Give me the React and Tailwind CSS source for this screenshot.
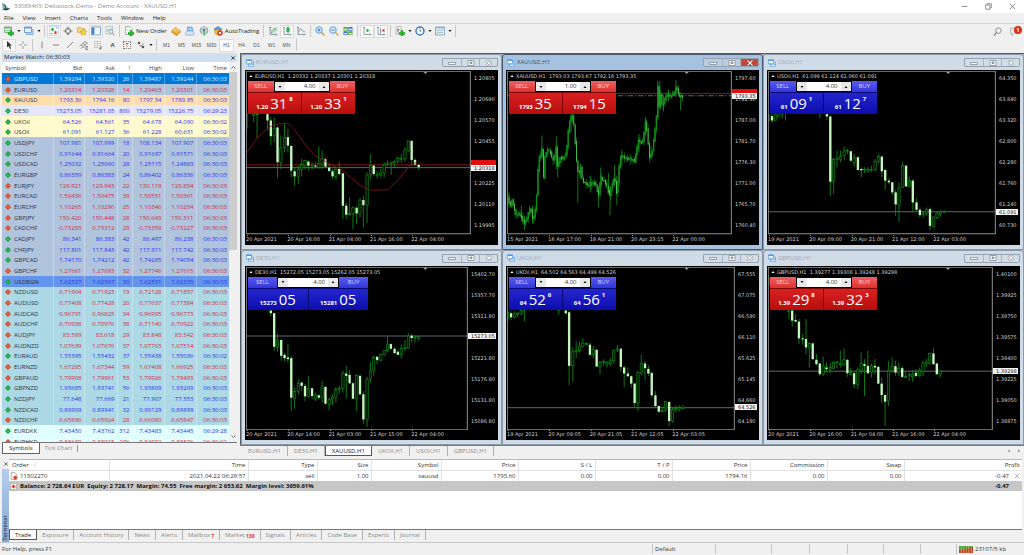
import { useState } from 'react';
import clsx from 'clsx';

// symbol, bid, ask, spread, high, low, time, direction, row colour
const QUOTES = [
  ['GBPUSD', '1.39294', '1.39320', '26', '1.39487', '1.39244', '06:30:03', 'down', 'bg-[#0078d7]'],
  ['EURUSD', '1.20314', '1.20328', '14', '1.20463', '1.20301', '06:30:03', 'down', 'bg-[#b0c4de]'],
  ['XAUUSD', '1793.36', '1794.16', '80', '1797.54', '1789.95', '06:30:03', 'up', 'bg-[#ffdead]'],
  ['DE30', '15273.05', '15281.05', '800', '15279.05', '15226.75', '06:29:23', 'up', 'bg-[#e6e6fa]'],
  ['UKOil', '64.526', '64.561', '35', '64.678', '64.090', '06:30:02', 'up', 'bg-[#fffacd]'],
  ['USOil', '61.091', '61.127', '36', '61.228', '60.631', '06:30:02', 'up', 'bg-[#fffacd]'],
  ['USDJPY', '107.981', '107.999', '18', '108.134', '107.907', '06:30:03', 'up', 'bg-[#b0c4de]'],
  ['USDCHF', '0.91644', '0.91664', '20', '0.91697', '0.91571', '06:30:03', 'up', 'bg-[#b0c4de]'],
  ['USDCAD', '1.25032', '1.25060', '28', '1.25115', '1.24883', '06:30:03', 'up', 'bg-[#b0c4de]'],
  ['EURGBP', '0.86359', '0.86383', '24', '0.86402', '0.86336', '06:30:03', 'up', 'bg-[#b0c4de]'],
  ['EURJPY', '129.921', '129.943', '22', '130.119', '129.854', '06:30:03', 'down', 'bg-[#b0c4de]'],
  ['EURCAD', '1.50436', '1.50475', '39', '1.50551', '1.50361', '06:30:03', 'down', 'bg-[#b0c4de]'],
  ['EURCHF', '1.10265', '1.10290', '25', '1.10346', '1.10254', '06:30:03', 'down', 'bg-[#b0c4de]'],
  ['GBPJPY', '150.420', '150.448', '28', '150.643', '150.311', '06:30:03', 'down', 'bg-[#b0c4de]'],
  ['CADCHF', '0.73283', '0.73312', '29', '0.73358', '0.73227', '06:30:03', 'down', 'bg-[#b0c4de]'],
  ['CADJPY', '86.341', '86.383', '42', '86.497', '86.238', '06:30:03', 'up', 'bg-[#b0c4de]'],
  ['CHFJPY', '117.801', '117.843', '42', '117.911', '117.742', '06:30:03', 'up', 'bg-[#b0c4de]'],
  ['GBPCAD', '1.74170', '1.74212', '42', '1.74285', '1.74054', '06:30:03', 'up', 'bg-[#b0c4de]'],
  ['GBPCHF', '1.27661', '1.27693', '32', '1.27746', '1.27615', '06:30:03', 'down', 'bg-[#b0c4de]'],
  ['USDBGN', '1.62537', '1.62567', '30', '1.62551', '1.62335', '06:30:03', 'up', 'bg-[#6495ed]'],
  ['NZDUSD', '0.71904', '0.71923', '19', '0.72128', '0.71857', '06:30:03', 'down', 'bg-[#add8e6]'],
  ['AUDUSD', '0.77408', '0.77428', '20', '0.77637', '0.77384', '06:30:03', 'down', 'bg-[#add8e6]'],
  ['AUDCAD', '0.96791', '0.96825', '34', '0.96995', '0.96773', '06:30:03', 'down', 'bg-[#add8e6]'],
  ['AUDCHF', '0.70938', '0.70976', '38', '0.71140', '0.70922', '06:30:03', 'down', 'bg-[#add8e6]'],
  ['AUDJPY', '83.589', '83.618', '29', '83.848', '83.542', '06:30:03', 'down', 'bg-[#add8e6]'],
  ['AUDNZD', '1.07639', '1.07676', '37', '1.07763', '1.07514', '06:30:03', 'down', 'bg-[#add8e6]'],
  ['EURAUD', '1.55395', '1.55432', '37', '1.55438', '1.55036', '06:30:02', 'up', 'bg-[#add8e6]'],
  ['EURNZD', '1.67285', '1.67344', '59', '1.67408', '1.66925', '06:30:03', 'down', 'bg-[#add8e6]'],
  ['GBPAUD', '1.79908', '1.79961', '53', '1.79926', '1.79493', '06:30:03', 'down', 'bg-[#add8e6]'],
  ['GBPNZD', '1.93685', '1.93741', '56', '1.93809', '1.93209', '06:30:03', 'up', 'bg-[#add8e6]'],
  ['NZDJPY', '77.648', '77.669', '21', '77.907', '77.553', '06:30:03', 'up', 'bg-[#add8e6]'],
  ['NZDCAD', '0.89909', '0.89941', '32', '0.90129', '0.89899', '06:30:03', 'up', 'bg-[#add8e6]'],
  ['NZDCHF', '0.65896', '0.65924', '28', '0.66080', '0.65847', '06:30:03', 'down', 'bg-[#add8e6]'],
  ['EURDKK', '7.43450', '7.43762', '312', '7.43483', '7.43445', '06:29:28', 'up', 'bg-[#e0ffff]'],
  ['EURHKD', '9.33639', '9.33915', '276', '9.34992', '9.33576', '06:30:02', 'down', 'bg-[#e0ffff]'],
];

// candle: x, high, body top, body bottom, low, 1 = bull
const EURUSD = [
  [17, 130, 186, 225, 235, 1], [38, 186, 186, 190, 210, 1], [48, 186, 186, 188, 258, 1],
  [79, 180, 186, 205, 235, 0], [89, 195, 205, 252, 278, 0], [99, 195, 228, 250, 270, 1],
  [109, 222, 226, 330, 376, 0], [119, 250, 287, 330, 350, 1], [130, 212, 255, 287, 300, 1],
  [140, 230, 255, 280, 300, 0], [150, 280, 281, 355, 375, 0], [160, 345, 357, 372, 400, 0],
  [171, 340, 352, 372, 395, 1], [181, 320, 337, 352, 372, 1], [191, 322, 325, 340, 352, 1],
  [201, 325, 328, 340, 355, 0], [212, 328, 338, 341, 352, 1], [222, 330, 340, 343, 350, 0],
  [232, 283, 333, 345, 350, 1], [242, 295, 320, 335, 350, 1], [252, 315, 321, 343, 348, 0],
  [263, 335, 346, 356, 360, 0], [273, 350, 357, 372, 380, 0], [283, 345, 352, 372, 382, 1],
  [293, 328, 350, 365, 370, 0], [304, 362, 363, 460, 500, 0], [314, 450, 460, 487, 500, 0],
  [324, 435, 483, 487, 490, 1], [334, 462, 466, 483, 530, 1], [345, 462, 466, 483, 515, 0],
  [355, 438, 443, 483, 495, 1], [365, 430, 443, 458, 525, 0], [376, 360, 368, 458, 512, 1],
  [386, 306, 340, 368, 380, 1], [396, 335, 340, 365, 372, 0], [406, 355, 366, 370, 378, 1],
  [417, 350, 362, 368, 375, 1], [427, 330, 336, 362, 375, 1], [437, 325, 333, 336, 340, 1],
  [448, 328, 330, 335, 368, 1], [458, 325, 328, 332, 345, 1], [468, 312, 318, 328, 335, 1],
  [478, 305, 318, 322, 332, 1], [489, 285, 293, 320, 328, 1], [499, 264, 266, 295, 300, 1],
  [509, 264, 266, 323, 340, 0], [519, 318, 323, 337, 340, 0], [530, 334, 338, 345, 353, 0],
];

const USOIL = [
  [23, 185, 190, 205, 208, 1], [33, 185, 192, 205, 213, 0], [43, 180, 188, 205, 207, 1],
  [53, 180, 185, 192, 195, 1], [63, 180, 184, 186, 200, 1], [73, 180, 182, 184, 205, 1],
  [175, 180, 182, 185, 198, 1], [196, 180, 186, 193, 203, 0], [206, 190, 193, 388, 430, 0],
  [216, 315, 322, 388, 425, 1], [226, 295, 319, 322, 345, 1], [236, 295, 312, 322, 330, 1],
  [247, 283, 296, 310, 322, 1], [257, 290, 295, 298, 305, 1], [267, 295, 297, 325, 330, 0],
  [277, 305, 315, 332, 343, 1], [288, 312, 315, 353, 355, 0], [298, 345, 350, 354, 374, 0],
  [308, 345, 351, 354, 362, 1], [318, 345, 352, 355, 362, 1], [328, 340, 351, 354, 358, 1],
  [339, 320, 328, 352, 358, 1], [349, 305, 312, 328, 333, 1], [359, 310, 313, 357, 375, 0],
  [369, 350, 353, 385, 412, 0], [380, 378, 385, 390, 395, 0], [390, 388, 390, 420, 428, 0],
  [400, 412, 420, 456, 490, 0], [410, 390, 407, 458, 508, 1], [421, 328, 340, 405, 406, 1],
  [431, 338, 340, 402, 404, 0], [441, 375, 385, 402, 404, 1], [451, 380, 385, 450, 475, 0],
  [462, 438, 450, 472, 475, 0], [472, 465, 472, 488, 495, 0], [482, 475, 484, 487, 495, 1],
  [492, 465, 472, 482, 490, 1], [502, 465, 470, 520, 533, 0], [513, 490, 494, 522, 525, 1],
  [523, 476, 482, 495, 500, 1], [533, 474, 478, 484, 492, 1], [544, 472, 476, 480, 482, 1],
];

const DE30 = [
  [89, 178, 180, 188, 197, 0], [99, 186, 188, 288, 300, 0], [109, 250, 268, 290, 302, 1],
  [120, 265, 268, 315, 330, 0], [130, 308, 312, 322, 332, 0], [140, 280, 320, 325, 335, 0],
  [150, 315, 322, 440, 480, 0], [160, 410, 422, 442, 473, 1], [171, 385, 397, 422, 430, 1],
  [181, 392, 395, 405, 420, 0], [191, 398, 405, 436, 450, 0], [201, 375, 412, 436, 440, 1],
  [212, 410, 412, 435, 445, 0], [222, 425, 432, 442, 450, 1], [232, 430, 433, 440, 445, 0],
  [242, 390, 408, 440, 455, 1], [252, 405, 408, 458, 460, 0], [263, 440, 445, 460, 478, 1],
  [273, 430, 438, 445, 462, 1], [283, 408, 415, 440, 455, 1], [293, 405, 412, 415, 430, 1],
  [304, 360, 367, 412, 425, 1], [314, 345, 368, 375, 442, 0], [324, 358, 372, 397, 400, 0],
  [334, 395, 397, 443, 445, 0], [345, 370, 373, 443, 480, 1], [355, 370, 375, 430, 432, 0],
  [365, 420, 430, 505, 518, 0], [376, 378, 385, 505, 528, 1], [386, 333, 360, 385, 395, 1],
  [396, 315, 320, 358, 375, 1], [406, 315, 318, 328, 340, 0], [417, 308, 312, 328, 332, 1],
  [427, 298, 300, 312, 315, 1], [437, 258, 280, 300, 305, 1], [447, 278, 280, 294, 297, 0],
  [458, 290, 294, 307, 310, 0], [468, 298, 303, 312, 313, 0], [478, 283, 293, 312, 322, 1],
  [489, 268, 290, 293, 300, 1], [499, 247, 256, 293, 294, 1], [509, 250, 255, 262, 275, 0],
  [519, 255, 260, 263, 275, 1], [530, 255, 257, 262, 270, 1],
];

const UKOIL = [
  [20, 180, 185, 205, 215, 1], [30, 182, 188, 200, 208, 0], [40, 182, 190, 200, 204, 1],
  [50, 184, 188, 192, 200, 1], [60, 178, 180, 190, 194, 1], [70, 178, 178, 180, 212, 1],
  [172, 178, 178, 180, 192, 1], [193, 178, 180, 188, 193, 0], [203, 180, 185, 345, 403, 0],
  [214, 290, 303, 345, 392, 1], [224, 272, 300, 303, 322, 1], [234, 272, 286, 300, 305, 1],
  [244, 262, 277, 286, 290, 1], [255, 275, 279, 282, 285, 1], [265, 275, 282, 312, 315, 0],
  [275, 285, 297, 312, 322, 1], [285, 295, 297, 347, 349, 0], [295, 330, 335, 348, 370, 1],
  [306, 325, 332, 335, 345, 1], [316, 330, 335, 340, 350, 1], [326, 322, 330, 340, 345, 1],
  [336, 295, 300, 330, 338, 1], [347, 283, 294, 298, 305, 1], [357, 292, 294, 348, 362, 0],
  [367, 345, 350, 368, 408, 0], [378, 350, 368, 376, 378, 0], [388, 374, 376, 398, 410, 0],
  [398, 396, 398, 456, 470, 0], [408, 360, 365, 456, 480, 1], [418, 312, 338, 367, 372, 1],
  [429, 330, 338, 352, 388, 0], [439, 343, 354, 368, 375, 0], [449, 364, 366, 433, 440, 0],
  [460, 420, 433, 465, 470, 0], [470, 462, 465, 482, 485, 0], [480, 470, 478, 482, 484, 1],
  [490, 450, 452, 478, 482, 1], [501, 450, 453, 510, 525, 0], [511, 470, 476, 510, 515, 1],
  [521, 462, 472, 477, 485, 1], [531, 462, 470, 474, 482, 1], [542, 463, 468, 472, 475, 1],
];

const GBPUSD = [
  [21, 80, 84, 104, 106, 1], [83, 178, 178, 182, 205, 1], [93, 178, 180, 210, 228, 0],
  [103, 190, 208, 213, 215, 0], [113, 205, 213, 263, 280, 0], [124, 250, 263, 266, 282, 0],
  [134, 205, 265, 290, 310, 0], [144, 275, 278, 292, 350, 1], [154, 276, 278, 325, 328, 0],
  [165, 310, 327, 340, 345, 0], [175, 336, 338, 370, 375, 0], [185, 318, 345, 370, 375, 1],
  [195, 335, 350, 355, 365, 0], [206, 335, 350, 355, 368, 1], [216, 332, 335, 352, 355, 1],
  [226, 330, 333, 336, 352, 1], [236, 300, 338, 342, 350, 1], [247, 293, 327, 342, 345, 1],
  [257, 325, 327, 367, 378, 0], [267, 350, 365, 370, 375, 1], [277, 365, 367, 400, 412, 0],
  [288, 350, 357, 400, 415, 1], [298, 305, 337, 360, 370, 1], [308, 325, 340, 345, 435, 0],
  [318, 300, 345, 367, 370, 0], [329, 338, 345, 365, 380, 1], [339, 325, 345, 350, 370, 0],
  [349, 346, 348, 398, 400, 0], [359, 380, 398, 432, 455, 0], [369, 430, 432, 452, 525, 0],
  [379, 330, 360, 450, 465, 1], [390, 320, 346, 360, 365, 1], [400, 330, 346, 365, 375, 0],
  [410, 335, 352, 365, 375, 1], [420, 345, 352, 378, 382, 0], [430, 360, 376, 379, 382, 1],
  [441, 365, 370, 373, 390, 1], [451, 358, 370, 378, 392, 1], [461, 355, 366, 375, 380, 0],
  [472, 350, 358, 375, 378, 1], [482, 330, 336, 362, 375, 1], [492, 325, 333, 338, 348, 1],
  [502, 305, 308, 338, 342, 1], [513, 292, 308, 340, 342, 0], [523, 336, 338, 370, 372, 0],
  [533, 358, 360, 372, 380, 1],
];

// closing prices of the gold chart, which is zoomed out too far to list bar by bar
const GOLD_PATH = [
  [20, 440], [28, 460], [32, 445], [40, 470], [45, 490], [52, 485], [58, 490], [70, 515], [80, 490],
  [88, 460], [92, 500], [98, 495], [104, 460], [108, 400], [112, 320], [118, 310], [122, 285],
  [127, 383], [131, 310], [137, 295], [145, 295], [150, 315], [157, 325], [165, 280], [168, 350],
  [175, 318], [185, 320], [195, 300], [200, 240], [205, 205], [213, 192], [218, 225], [222, 290],
  [226, 340], [232, 368], [238, 345], [242, 385], [250, 393], [262, 400], [275, 390], [283, 400],
  [290, 430], [298, 375], [305, 385], [312, 395], [317, 405], [322, 435], [330, 400], [338, 375],
  [345, 430], [350, 360], [357, 310], [365, 315], [378, 322], [390, 320], [398, 330], [404, 290],
  [410, 265], [420, 275], [426, 245], [431, 200], [436, 255], [442, 315], [450, 300], [458, 240],
  [463, 190], [467, 105], [471, 165], [475, 125], [480, 165], [490, 135], [500, 130], [507, 132],
  [515, 125], [522, 105], [528, 125], [535, 135], [541, 135],
];

const GOLD_WICKS = [
  [24, 420, 460], [61, 460, 500], [70, 490, 533], [94, 460, 512], [122, 250, 320], [165, 253, 350],
  [169, 310, 375], [209, 188, 240], [229, 340, 452], [238, 335, 380], [266, 370, 420], [290, 400, 465],
  [297, 346, 410], [320, 362, 420], [325, 400, 488], [338, 340, 400], [345, 370, 458], [360, 292, 340],
  [411, 245, 300], [431, 195, 250], [447, 280, 320], [467, 87, 200], [473, 87, 160], [484, 130, 178],
  [499, 112, 145], [521, 84, 130], [535, 130, 174],
];

function goldAt(x) {
  const i = GOLD_PATH.findIndex((p) => p[0] >= x);
  if (i <= 0) return GOLD_PATH[i === 0 ? 0 : GOLD_PATH.length - 1][1];
  const [x0, y0] = GOLD_PATH[i - 1];
  const [x1, y1] = GOLD_PATH[i];
  return y0 + ((y1 - y0) * (x - x0)) / (x1 - x0);
}

const GOLD = Array.from({ length: 128 }, (_, i) => {
  const x = 20 + i * 4.1;
  const open = goldAt(x - 4.1);
  const close = goldAt(x);
  const top = Math.min(open, close) - ((i * 5) % 7);
  const bottom = Math.max(open, close) + ((i * 3) % 6);
  return [x, top - ((i * 7) % 13), top, bottom, bottom + ((i * 11) % 14), close < open ? 1 : 0];
});

const CHARTS = [
  {
    name: 'EURUSD,H1', ohlc: '1.20332 1.20337 1.20301 1.20318', color: 'red', box: [15, 57, 671, 489],
    sell: ['1.20', '31', '8'], buy: ['1.20', '33', '1'], volume: '4.00', candles: EURUSD, price: 346, ask: 338,
    tag: '1.20318', average: 'M15 305 L50 255 L80 228 L100 217 L140 213 L160 233 L190 275 L220 310 L260 331 L300 352 L330 377 L360 403 L390 414 L437 412 L460 392 L480 368 L505 338 L525 330',
    scale: ['1.20805', '1.20690', '1.20570', '1.20455', '1.20340', '1.20225', '1.20110', '1.19995'],
    dates: ['20 Apr 2021', '20 Apr 16:00', '21 Apr 04:00', '21 Apr 16:00', '22 Apr 04:00'],
  },
  {
    name: 'XAUUSD,H1', ohlc: '1793.03 1793.67 1792.16 1793.35', color: 'red', box: [18, 57, 670, 489], active: true, dense: true,
    sell: ['1793', '35'], buy: ['1794', '15'], volume: '1.00', candles: GOLD, price: 131, ask: 124, tag: '1793.35',
    scale: ['1797.60', '1792.30', '1787.00', '1781.70', '1776.30', '1771.00', '1765.70', '1760.40'],
    dates: ['15 Apr 2021', '16 Apr 17:00', '19 Apr 21:00', '20 Apr 23:15', '22 Apr 00:00'],
  },
  {
    name: 'USOil,H1', ohlc: '61.099 61.124 61.060 61.091', color: 'blue', box: [21, 57, 677, 489],
    sell: ['61', '09', '1'], buy: ['61', '12', '7'], volume: '4.00', candles: USOIL, price: 478, tag: '61.091', narrow: true,
    scale: ['64.350', '63.840', '63.320', '62.800', '62.280', '61.760', '61.240', '60.730'],
    dates: ['19 Apr 2021', '20 Apr 09:00', '20 Apr 21:00', '21 Apr 12:00', '22 Apr 03:00'],
  },
  {
    name: 'DE30,H1', ohlc: '15272.05 15273.05 15262.05 15273.05', color: 'blue', box: [15, 50, 662, 488], wide: true,
    sell: ['15273', '05'], buy: ['15281', '05'], volume: '4.00', candles: DE30, price: 256, tag: '15273.05',
    scale: ['15402.70', '15357.70', '15311.80', '15266.80', '15221.80', '15176.80', '15131.80', '15086.80'],
    dates: ['20 Apr 2021', '20 Apr 14:00', '21 Apr 03:00', '21 Apr 15:00', '22 Apr 04:00'],
  },
  {
    name: 'UKOil,H1', ohlc: '64.502 64.563 64.499 64.526', color: 'blue', box: [18, 50, 679, 488],
    sell: ['64', '52', '6'], buy: ['64', '56', '1'], volume: '4.00', candles: UKOIL, price: 470, tag: '64.526', narrow: true,
    scale: ['67.555', '67.075', '66.590', '66.110', '65.625', '65.145', '64.660', '64.180'],
    dates: ['19 Apr 2021', '20 Apr 09:05', '20 Apr 21:05', '21 Apr 12:05', '22 Apr 03:05'],
  },
  {
    name: 'GBPUSD,H1', ohlc: '1.39277 1.39308 1.39248 1.39298', color: 'red', box: [21, 50, 669, 488],
    sell: ['1.39', '29', '8'], buy: ['1.39', '32', '3'], volume: '4.00', candles: GBPUSD, price: 361, tag: '1.39298',
    scale: ['1.40100', '1.39925', '1.39750', '1.39575', '1.39400', '1.39225', '1.39050', '1.38875'],
    dates: ['20 Apr 2021', '20 Apr 16:00', '21 Apr 04:00', '21 Apr 16:00', '22 Apr 04:00'],
  },
];

const CHART_TABS = ['EURUSD,H1', 'DE30,H1', 'XAUUSD,H1', 'UKOil,H1', 'USOil,H1', 'GBPUSD,H1'];

const TERMINAL_TABS = [
  ['Trade'], ['Exposure'], ['Account History'], ['News'], ['Alerts'], ['Mailbox', '7'],
  ['Market', '136'], ['Signals'], ['Articles'], ['Code Base'], ['Experts'], ['Journal'],
];

const TERMINAL_COLUMNS = [
  ['Order', 'w-[100px]', '11302270'],
  ['Time', 'w-[139px]', '2021.04.22 06:29:57'],
  ['Type', 'w-[69px]', 'sell'],
  ['Size', 'w-[54px]', '1.00'],
  ['Symbol', 'w-[70px]', 'xauusd'],
  ['Price', 'w-[77px]', '1793.60'],
  ['S / L', 'w-[77px]', '0.00'],
  ['T / P', 'w-[77px]', '0.00'],
  ['Price', 'w-[78px]', '1794.16'],
  ['Commission', 'w-[77px]', '0.00'],
  ['Swap', 'w-[77px]', '0.00'],
  ['Profit', 'w-[118px]', '-0.47'],
];

/* ---------- icons ---------- */

function Icon({ children, className = 'size-[10px]' }) {
  return (
    <svg viewBox="0 0 20 20" className={clsx('shrink-0', className)} fill="none" aria-hidden="true">
      {children}
    </svg>
  );
}

const plus = <path d="M12 9h4v4h4v4h-4v3h-4v-3H8v-4h4z" fill="#1fc01f" stroke="#0b8a14" strokeWidth=".8" />;
const axes = <path d="M4 2v15h14M2 4l2-2 2 2M16 15l2 2-2 2" stroke="#6a7a88" strokeWidth="1.4" />;

const ICONS = {
  newChart: (
    <Icon>
      <path d="M1 2h14v11H1z" fill="#eef5ee" stroke="#5f8f6d" strokeWidth="1.4" />
      <path d="M1 2h14v3H1z" fill="#73a98a" />
      <path d="M3 11l3-3 3 2 4-4" stroke="#2b9c3a" strokeWidth="1.4" />
      {plus}
    </Icon>
  ),
  profiles: (
    <Icon>
      <path d="M5 7h13v10H5z" fill="#cfe1f5" stroke="#5c8fc6" strokeWidth="1.4" />
      <path d="M1 2h14v11H1z" fill="#e8f1fb" stroke="#4d82bf" strokeWidth="1.4" />
      <path d="M1 2h14v3H1z" fill="#6ba0dc" />
    </Icon>
  ),
  watch: (
    <Icon>
      <path d="M1 1h18v18H1z" fill="#fff" stroke="#8fb2dd" />
      <path d="M7 3l4 4H9v3H5V7H3z" fill="#26a83a" />
      <path d="M13 17l-4-4h2v-3h4v3h2z" fill="#dc4a2a" />
      <path d="M14 4h3M3 15h4" stroke="#3c7ad0" strokeWidth="1.5" />
    </Icon>
  ),
  dataWindow: (
    <Icon>
      <circle cx="10" cy="10" r="5.5" stroke="#666" strokeWidth="1.6" />
      <path d="M10 1v7M10 12v7M1 10h7M12 10h7" stroke="#666" strokeWidth="1.6" />
    </Icon>
  ),
  navigator: (
    <Icon>
      <path d="M1 3h6l2 2h6v8H1z" fill="#f7d66a" stroke="#c39422" />
      <path d="M13 6l2 4 5 .6-3.6 3 1 4.8L13 16l-4.4 2.4 1-4.8-3.6-3 5-.6z" fill="#ffd83e" stroke="#b98816" />
    </Icon>
  ),
  terminal: (
    <Icon>
      <path d="M1 2h18v16H1z" fill="#fff" stroke="#4a86cf" strokeWidth="1.5" />
      <path d="M2 3h5v14H2z" fill="#4a86cf" />
      <path d="M9 6h8M9 9h8" stroke="#d5e3f4" strokeWidth="1.2" />
    </Icon>
  ),
  tester: (
    <Icon>
      <path d="M2 1h13v15H2z" fill="#eff3ee" stroke="#8c9d98" />
      <path d="M4 11l3-5 3 3 3-5" stroke="#4ca866" strokeWidth="1.3" />
      <circle cx="12" cy="11" r="4" fill="#d7ebf8" fillOpacity=".8" stroke="#7e9fb6" strokeWidth="1.5" />
      <path d="M15 14l4 5" stroke="#c9a14a" strokeWidth="2.2" />
    </Icon>
  ),
  newOrder: (
    <Icon>
      <path d="M3 1h9l4 4v12H3z" fill="#fff" stroke="#7c8b99" strokeWidth="1.2" />
      <path d="M5 6h6M5 9h7" stroke="#a9b6c2" />
      {plus}
    </Icon>
  ),
  editor: (
    <Icon>
      <path d="M1 10l8-7 10 7-8 8z" fill="#f2b63b" stroke="#b17d17" />
      <path d="M1 10v3l10 7v-3zM11 17v3l8-7v-3z" fill="#d18f1f" />
      <path d="M5 10l5-4 5 4" stroke="#fff2c4" strokeWidth="1.4" />
    </Icon>
  ),
  signals: (
    <Icon>
      <path d="M5 2h9l2 9H5z" fill="#7db5ee" stroke="#3a77bd" />
      <path d="M7 4h6M7 7h6" stroke="#fff" />
      <path d="M3 18a3 3 0 010-6 4 4 0 017-1 4 4 0 017 2 3 3 0 010 5z" fill="#dbe8f6" stroke="#6190c4" strokeWidth="1.2" />
    </Icon>
  ),
  vps: (
    <Icon>
      <circle cx="10" cy="9" r="8" fill="#d5dcdf" stroke="#8d9aa3" />
      <path d="M5 4a8 8 0 000 10M15 4a8 8 0 010 10" stroke="#718c9e" strokeWidth="1.4" />
      <circle cx="10" cy="8" r="3" fill="#5b7f98" />
      <path d="M10 9l1 10" stroke="#3aa84c" strokeWidth="2.4" />
    </Icon>
  ),
  autoTrading: (
    <Icon>
      <path d="M2 6l8-5 8 5-3 3H5z" fill="#5f9fdc" stroke="#2f6cab" />
      <path d="M3 8h13v6l-6 5-6-4z" fill="#f1c24c" stroke="#b58418" />
      <circle cx="14" cy="14" r="5.4" fill="#dd3524" />
      <path d="M12 12h4v4h-4z" fill="#fff" />
    </Icon>
  ),
  bars: (
    <Icon>
      {axes}
      <path d="M8 7v8M8 13H6M12 4v9M12 6h2M16 3v7" stroke="#3f9a60" strokeWidth="1.5" />
    </Icon>
  ),
  candles: (
    <Icon>
      {axes}
      <path d="M12 1v14" stroke="#15902d" strokeWidth="1.4" />
      <path d="M9.500 3.500h5v8h-5z" fill="#2cc24a" stroke="#15902d" />
    </Icon>
  ),
  line: (
    <Icon>
      {axes}
      <path d="M5 13c3-9 5-9 7-5s3 3 6 4" stroke="#607783" strokeWidth="1.4" />
    </Icon>
  ),
  zoomIn: (
    <Icon>
      <circle cx="8" cy="8" r="6.500" fill="#d9ecfb" stroke="#3f87cc" strokeWidth="1.6" />
      <path d="M5 8h6M8 5v6" stroke="#2670bd" strokeWidth="1.8" />
      <path d="M13 13l6 6" stroke="#d9a43a" strokeWidth="3" />
    </Icon>
  ),
  zoomOut: (
    <Icon>
      <circle cx="8" cy="8" r="6.500" fill="#d9ecfb" stroke="#3f87cc" strokeWidth="1.6" />
      <path d="M5 8h6" stroke="#2670bd" strokeWidth="1.8" />
      <path d="M13 13l6 6" stroke="#d9a43a" strokeWidth="3" />
    </Icon>
  ),
  tile: (
    <Icon>
      <path d="M1 2h8.500v7.500H1zM10.500 10.500H19V18h-8.500z" fill="#5aa83c" />
      <path d="M10.500 2H19v7.500h-8.500zM1 10.500h8.500V18H1z" fill="#3f78c8" />
      <path d="M2.500 5.500h5.500v2.500H2.500zM12 5.500h5.500v2.500H12zM2.500 14H8v2.500H2.500zM12 14h5.500v2.500H12z" fill="#f4f9ff" />
    </Icon>
  ),
  autoScroll: (
    <Icon>
      {axes}
      <path d="M9 5l6 4-6 4z" fill="#2ba54a" />
    </Icon>
  ),
  shift: (
    <Icon>
      {axes}
      <path d="M9 4v11" stroke="#4f6c8c" strokeWidth="1.4" />
      <path d="M17 5l-6 4 6 4z" fill="#c9543a" />
    </Icon>
  ),
  indicators: (
    <Icon>
      <path d="M2 1h10v15H2z" fill="#f5f5f5" stroke="#8a8a8a" />
      <path d="M8 4c-2 0-2 1-2 4v5M4 8h5" stroke="#555" strokeWidth="1.3" />
      {plus}
    </Icon>
  ),
  periods: (
    <Icon>
      <circle cx="10" cy="10" r="8" fill="#fff" stroke="#3879c5" strokeWidth="3" />
      <path d="M10 5v5l3 2" stroke="#444" strokeWidth="1.5" />
    </Icon>
  ),
  templates: (
    <Icon>
      <path d="M1 2h18v16H1z" fill="#eef4fa" stroke="#6a93c2" strokeWidth="1.5" />
      <path d="M1 2h18v3H1z" fill="#8cb4e0" />
      <path d="M3 10l4-2 4 1 5-2M3 15l4-2 4 1 5-2" stroke="#4e8c63" strokeWidth="1.2" />
    </Icon>
  ),
  cursor: <Icon><path d="M6 2v13l3-3 3 6 2-1-2-6h4z" fill="#333" /></Icon>,
  crosshair: <Icon><path d="M10 2v6M10 12v6M2 10h6M12 10h6" stroke="#888" strokeWidth="1.5" /></Icon>,
  vline: <Icon><path d="M10 3v14" stroke="#666" strokeWidth="1.5" /></Icon>,
  hline: <Icon><path d="M4 10h12" stroke="#666" strokeWidth="1.5" /></Icon>,
  trend: <Icon><path d="M4 16L16 4" stroke="#666" strokeWidth="1.5" /></Icon>,
  channel: (
    <Icon>
      <path d="M1 13L14 2M3 17L18 5M4 9l6 7M8 6l5 7M12 3l4 5" stroke="#666" strokeWidth="1.2" />
      <path d="M14 13h4M14 16h3M14 19h4M14 13v6" stroke="#444" strokeWidth="1.2" />
    </Icon>
  ),
  fibo: (
    <Icon>
      <path d="M2 3h15M2 7h15M2 11h15M2 15h9" stroke="#888" strokeWidth="1.2" strokeDasharray="2 1" />
      <path d="M14 14h4M14 17h3M14 14v6" stroke="#444" strokeWidth="1.2" />
    </Icon>
  ),
  arrows: (
    <Icon>
      <path d="M6 3l3 3-3 3-3-3z" fill="#444" />
      <path d="M7 10l3 3 5-6" stroke="#555" strokeWidth="1.500" />
      <path d="M14 11l3 3-3 3-3-3z" fill="#444" />
    </Icon>
  ),
};

function Caret() {
  return (
    <svg viewBox="0 0 6 4" className="h-[2px] w-[4px] shrink-0" aria-hidden="true">
      <path d="M0 0h6L3 4z" fill="#111" />
    </svg>
  );
}

function WindowIcon() {
  return (
    <svg viewBox="0 0 20 20" className="size-[8px] shrink-0" fill="none" aria-hidden="true">
      <path d="M6 8h13v10H6z" fill="#fff" stroke="#4f9ae0" strokeWidth="2" />
      <path d="M1 2h13v10H1z" fill="#fff" stroke="#4f9ae0" strokeWidth="2" />
      <path d="M1 2h13v3H1zM6 12h13v2H6z" fill="#4f9ae0" />
    </svg>
  );
}

/* ---------- toolbars ---------- */

function Tool({ icon, label, text, active, menu }) {
  return (
    <button
      type="button"
      aria-label={label}
      className={clsx(
        'flex h-[13px] shrink-0 items-center justify-center',
        active && 'border border-[#dcdcdc] bg-[#fafafa]',
        menu && 'w-[20px] gap-[3px]',
        text && 'gap-[2px] px-[2px]',
        !menu && !text && 'w-[14px]',
      )}
    >
      {ICONS[icon]}
      {text}
      {menu && <Caret />}
    </button>
  );
}

function Divider() {
  return <span className="mx-[2px] h-[12px] w-px shrink-0 bg-[#c8c8c8]" />;
}

function TitleBar() {
  return (
    <header className="flex h-[13px] shrink-0 items-center bg-white pl-[2px] text-[#8d8d8d]">
      <svg viewBox="0 0 20 20" className="size-[9px]" aria-hidden="true">
        <path d="M1 2l8 5 1 5 9 2-9 1-8 4z" fill="#3a6f74" />
        <path d="M2 3v14l5-5z" fill="#7fc0ae" />
        <path d="M2 17l8-3 9 1-9 4z" fill="#2a4660" />
      </svg>
      <h1 className="ml-[3px]">33088463: Deltastock-Demo - Demo Account - XAUUSD,H1</h1>
      <div className="ml-auto flex text-[#666]">
        <button type="button" aria-label="Minimize" className="flex w-[24px] justify-center">
          <Icon className="size-[7px]"><path d="M2 10h16" stroke="currentColor" strokeWidth="2" /></Icon>
        </button>
        <button type="button" aria-label="Restore" className="flex w-[24px] justify-center">
          <Icon className="size-[7px]"><path d="M2 6h12v12H2zM6 6V2h12v12h-4" stroke="currentColor" strokeWidth="2" /></Icon>
        </button>
        <button type="button" aria-label="Close" className="flex w-[24px] justify-center">
          <Icon className="size-[7px]"><path d="M2 2l16 16M18 2L2 18" stroke="currentColor" strokeWidth="2" /></Icon>
        </button>
      </div>
    </header>
  );
}

function MenuBar() {
  return (
    <nav className="flex h-[11px] shrink-0 items-center gap-[9px] border-b border-[#d4d4d4] pl-[4px] text-[#222]">
      {['File', 'View', 'Insert', 'Charts', 'Tools', 'Window', 'Help'].map((item) => (
        <button type="button" key={item}>{item}</button>
      ))}
    </nav>
  );
}

function MainToolbar() {
  return (
    <div className="flex h-[14px] shrink-0 items-center pl-[2px] text-[#222]">
      <Tool icon="newChart" label="New chart" menu />
      <Tool icon="profiles" label="Profiles" menu />
      <Divider />
      <Tool icon="watch" label="Market Watch" active />
      <Tool icon="dataWindow" label="Data Window" />
      <Tool icon="navigator" label="Navigator" />
      <Tool icon="terminal" label="Terminal" active />
      <Tool icon="tester" label="Strategy Tester" />
      <Divider />
      <Tool icon="newOrder" label="New Order" text="New Order" />
      <Tool icon="editor" label="MetaEditor" />
      <Tool icon="signals" label="Signals" />
      <Tool icon="vps" label="Virtual hosting" />
      <Tool icon="autoTrading" label="AutoTrading" text="AutoTrading" />
      <Divider />
      <Tool icon="bars" label="Bar chart" />
      <Tool icon="candles" label="Candlesticks" active />
      <Tool icon="line" label="Line chart" />
      <Divider />
      <Tool icon="zoomIn" label="Zoom in" />
      <Tool icon="zoomOut" label="Zoom out" />
      <Tool icon="tile" label="Tile windows" />
      <Divider />
      <Tool icon="autoScroll" label="Auto scroll" active />
      <Tool icon="shift" label="Chart shift" active />
      <Divider />
      <Tool icon="indicators" label="Indicators" menu />
      <Tool icon="periods" label="Periods" menu />
      <Tool icon="templates" label="Templates" menu />
      <Divider />
      <div className="ml-auto flex items-center gap-[8px] pr-[2px]">
        <button type="button" aria-label="Search">
          <Icon className="size-[9px]">
            <circle cx="12" cy="8" r="6" stroke="#888" strokeWidth="2" />
            <path d="M8 12l-6 7" stroke="#888" strokeWidth="3" />
          </Icon>
        </button>
        <button type="button" aria-label="Messages" className="relative">
          <Icon className="size-[12px]">
            <path d="M1 5h12v9H7l-4 4v-4H1z" fill="#e8e8e8" stroke="#999" />
          </Icon>
          <span className="absolute top-px right-0 size-[8px] rounded-full bg-[#dd3222] text-center text-[5px] leading-[8px] font-bold text-white">
            1
          </span>
        </button>
      </div>
    </div>
  );
}

function LineToolbar() {
  const [frame, setFrame] = useState('H1');

  return (
    <div className="flex h-[14px] shrink-0 items-center pl-[2px] text-[#555]">
      <Tool icon="cursor" label="Cursor" active />
      <Tool icon="crosshair" label="Crosshair" />
      <Divider />
      <Tool icon="vline" label="Vertical line" />
      <Tool icon="hline" label="Horizontal line" />
      <Tool icon="trend" label="Trendline" />
      <Tool icon="channel" label="Channel" />
      <Tool icon="fibo" label="Fibonacci" />
      <button type="button" className="w-[15px] font-bold">A</button>
      <button type="button" className="mx-[3px] size-[8px] border border-dotted border-[#777] leading-[6px]">T</button>
      <Tool icon="arrows" label="Arrows" menu />
      <Divider />
      {['M1', 'M5', 'M15', 'M30', 'H1', 'H4', 'D1', 'W1', 'MN'].map((f) => (
        <button
          type="button"
          key={f}
          onClick={() => setFrame(f)}
          className={clsx(
            "h-[13px] w-[15px] shrink-0 text-center font-['Liberation_Sans',sans-serif] text-[5px]",
            f === frame && 'border border-[#dcdcdc] bg-[#fafafa]',
          )}
        >
          {f}
        </button>
      ))}
      <Divider />
    </div>
  );
}

/* ---------- market watch ---------- */

function MarketWatch() {
  return (
    <section className="flex w-[240px] shrink-0 flex-col pr-[3px] pl-[2px]">
      <div className="flex h-[9px] shrink-0 items-center justify-between bg-[#cfdff0] px-[2px] text-[#222]">
        <h2>Market Watch: 06:30:03</h2>
        <button type="button" aria-label="Close Market Watch" className="text-[#222]">
          <Icon className="size-[4px]"><path d="M2 2l16 16M18 2L2 18" stroke="currentColor" strokeWidth="4" /></Icon>
        </button>
      </div>
      <div className="flex min-h-0 flex-1 overflow-hidden">
        <div className="h-full min-w-0 flex-1 overflow-hidden">
          <table className="w-full table-fixed border-collapse text-right leading-[10px]">
            <thead>
              <tr className="h-[11px] bg-white text-[#444]">
                <th className="w-[51px] pl-[3px] text-left font-normal">Symbol</th>
                <th className="w-[31px] pr-[2px] font-normal">Bid</th>
                <th className="w-[33px] pr-[2px] font-normal">Ask</th>
                <th className="w-[15px] pr-[2px] font-normal">!</th>
                <th className="w-[32px] pr-[2px] font-normal">High</th>
                <th className="w-[32px] pr-[2px] font-normal">Low</th>
                <th className="w-[33px] pr-[2px] font-normal">Time</th>
              </tr>
            </thead>
            <tbody>
              {QUOTES.map(([symbol, bid, ask, spread, high, low, time, dir, bg], i) => (
                <tr
                  key={symbol}
                  className={clsx(
                    'h-[11px] nth-[3n]:h-[10px]',
                    bg,
                    i === 0 && 'text-[#d8ecff]',
                    i > 0 && dir === 'up' && 'text-[#2f2ff0]',
                    i > 0 && dir === 'down' && 'text-[#dc2440]',
                  )}
                >
                  <td className="py-0 pl-[3px]">
                    <span className="flex items-center gap-[3px]">
                      <svg viewBox="0 0 12 12" className="size-[6px]" aria-hidden="true">
                        <path d="M6 0l6 6-6 6-6-6z" fill={dir === 'up' ? '#15a33a' : '#d9481c'} />
                        <path d={dir === 'up' ? 'M4 7h4L6 4z' : 'M4 5h4L6 8z'} fill="#fff" fillOpacity=".5" />
                      </svg>
                      <span className={i === 0 ? 'text-[#d8ecff]' : 'text-[#1f3350]'}>{symbol}</span>
                    </span>
                  </td>
                  {[bid, ask, spread, high, low, time].map((value, n) => (
                    <td key={n} className="border-l border-white/30 py-0 pr-[2px]">{value}</td>
                  ))}
                </tr>
              ))}
            </tbody>
          </table>
        </div>
        <div className="flex w-[8px] shrink-0 flex-col items-center bg-[#f0f0f0] py-[3px]">
          <Icon className="size-[5px]"><path d="M2 14l8-8 8 8" stroke="#444" strokeWidth="3" /></Icon>
          <div className="mt-[2px] h-[178px] w-full bg-[#cdcdcd]" />
          <Icon className="mt-auto size-[5px]"><path d="M2 6l8 8 8-8" stroke="#444" strokeWidth="3" /></Icon>
        </div>
      </div>
      <div className="flex h-[17px] shrink-0 items-start border-t border-[#777] text-[#8a8a8a]">
        <button type="button" className="h-[11px] border-x border-b border-[#666] bg-white px-[6px] text-[#222]">Symbols</button>
        <button type="button" className="h-[10px] px-[5px]">Tick Chart</button>
        <span className="mt-[2px] h-[7px] w-px bg-[#999]" />
      </div>
    </section>
  );
}

/* ---------- chart windows ---------- */

function Candle({ candle, dense }) {
  const [x, high, top, bottom, low, up] = candle;
  const half = dense ? 1.2 : 3.5;
  const height = Math.max(bottom - top, 2);

  return (
    <>
      <path d={`M${x} ${high}V${low}`} stroke={dense ? '#0f8a18' : '#109018'} strokeWidth={dense ? 2 : 2.5} />
      <rect
        x={x - half}
        y={top}
        width={half * 2}
        height={height}
        fill={up ? (dense ? '#0c8c18' : '#001a00') : (dense ? '#58cf5a' : '#c4f7bd')}
        stroke={up ? '#109a1a' : 'none'}
        strokeWidth="1.6"
      />
    </>
  );
}

function Plot({ chart }) {
  const [x, y, w, h] = chart.box;
  return (
    <svg viewBox={chart.box.join(' ')} preserveAspectRatio="none" className="absolute inset-0 size-full" aria-label={chart.name}>
      {chart.ask && <path d={`M${x} ${chart.ask}h${w}`} stroke="#b01515" strokeWidth="2.5" />}
      <path d={`M${x} ${chart.price}h${w}`} stroke="#737b86" strokeWidth="2.5" strokeDasharray={chart.dense ? '16 5 4 5' : undefined} />
      {chart.dense && GOLD_WICKS.map(([wx, a, b]) => (
        <path key={wx} d={`M${wx} ${a}V${b}`} stroke="#12901c" strokeWidth="2.5" />
      ))}
      {chart.candles.map((c) => <Candle key={c[0]} candle={c} dense={chart.dense} />)}
      {chart.average && <path d={chart.average} fill="none" stroke="#8c1414" strokeWidth="2.5" />}
      <path d={`M${x + 528} ${y + 2}h14l-7 7z`} fill="#9a9a9a" />
      <path d={`M${x + 1} ${y + 1}h${w - 3}v${h - 3}h${3 - w}z`} fill="none" stroke="#8e8e8e" strokeWidth="3" />
    </svg>
  );
}

function Price({ parts, side, color }) {
  const [small, big, sup] = parts;
  return (
    <button
      type="button"
      aria-label={`${side} at ${parts.join('')}`}
      className={clsx(
        'flex flex-1 items-end justify-center bg-linear-to-b pb-[2px] leading-[18px] text-white',
        color === 'red' ? 'from-[#d92020] to-[#b80c0c]' : 'from-[#2424cc] to-[#0c0cae]',
      )}
    >
      <span className="mr-[2px] text-[6px] leading-[10px] font-bold">{small}</span>
      <span className="text-[15px]">{big}</span>
      {sup && <span className="ml-[2px] self-start pt-[2px] text-[6px] leading-[8px] font-bold">{sup}</span>}
    </button>
  );
}

function OneClick({ chart }) {
  const label = clsx(
    'flex-1 bg-linear-to-b text-center leading-[11px]',
    chart.color === 'red' ? 'from-[#f06060] to-[#dc3030] text-[#ffd4d4]' : 'from-[#5a5af0] to-[#3434d8] text-[#d6d6ff]',
  );
  return (
    <div
      className={clsx(
        'absolute top-[10px] left-[2px] flex h-[33px] flex-col gap-px',
        chart.wide ? 'w-[120px]' : 'w-[107px]',
        chart.color === 'red' ? 'bg-[#7c0808]' : 'bg-[#080878]',
      )}
    >
      <div className="flex h-[11px]">
        <button type="button" className={label}>SELL</button>
        <div className={clsx('flex border border-black bg-white', chart.wide ? 'w-[62px]' : 'w-[56px]')}>
          <button type="button" aria-label="Less volume" className="flex w-[10px] items-center justify-center bg-[#e8e8e8]">
            <Caret />
          </button>
          <input
            aria-label={`${chart.name} volume`}
            defaultValue={chart.volume}
            className="w-0 min-w-0 flex-1 bg-white pr-[3px] text-right text-[#333]"
          />
          <button type="button" aria-label="More volume" className="flex w-[10px] items-center justify-center bg-[#e8e8e8]">
            <svg viewBox="0 0 6 4" className="h-[2px] w-[4px]" aria-hidden="true"><path d="M0 4h6L3 0z" fill="#111" /></svg>
          </button>
        </div>
        <button type="button" className={label}>BUY</button>
      </div>
      <div className="flex h-[21px] gap-px">
        <Price parts={chart.sell} side="Sell" color={chart.color} />
        <Price parts={chart.buy} side="Buy" color={chart.color} />
      </div>
    </div>
  );
}

function ChartWindow({ chart }) {
  const [, top, , height] = chart.box;
  const control = 'flex w-[18px] items-center justify-center border-l border-[#a9b4c0] first:border-l-0';

  return (
    <article
      className={clsx(
        'flex min-h-0 min-w-0 flex-col rounded-t-[3px] border px-[3px] pb-[4px]',
        chart.active ? 'border-[#46586c] bg-[#a6c2e0]' : 'border-[#8c9aa8] bg-[#cfdbe7]',
      )}
    >
      <div className={clsx('flex h-[15px] shrink-0 items-center gap-[2px] pl-px', chart.active ? 'text-[#3c4d62]' : 'text-[#9fa9b8]')}>
        <WindowIcon />
        <h2>{chart.name}</h2>
        <div className={clsx('ml-auto flex h-[9px] overflow-hidden rounded-b-[2px] border border-[#95a2b0]', chart.active ? 'bg-[#b8cce2]' : 'bg-[#d3dde8]')}>
          <button type="button" aria-label={`Minimize ${chart.name}`} className={control}>
            <svg viewBox="0 0 16 12" className="h-[6px] w-[8px]"><path d="M1 5h14v4H1z" fill="#fff" stroke="#7b858f" strokeWidth="1.5" /></svg>
          </button>
          <button type="button" aria-label={`Maximize ${chart.name}`} className={control}>
            <svg viewBox="0 0 16 12" className="h-[6px] w-[8px]"><path d="M2 1h12v10H2z" fill="#fff" stroke="#7b858f" strokeWidth="1.5" /><path d="M6 4h4v3H6z" fill="#aab" stroke="#7b858f" strokeWidth="1.5" /></svg>
          </button>
          <button type="button" aria-label={`Close ${chart.name}`} className={clsx(control, chart.active && 'bg-[#c4483a]')}>
            <svg viewBox="0 0 16 12" className="h-[6px] w-[8px]">
              <path d="M3 1l10 10M13 1L3 11" stroke={chart.active ? '#7d2018' : '#6f7984'} strokeWidth="4.5" />
              <path d="M3 1l10 10M13 1L3 11" stroke="#fff" strokeWidth="2.5" />
            </svg>
          </button>
        </div>
      </div>
      <div className="flex min-h-0 flex-1 flex-col bg-black pt-px pl-px font-['DejaVu_Sans',sans-serif] text-[5px] text-[#d0d0d0]">
        <div className="flex min-h-0 flex-1">
          <div className="relative min-w-0 flex-1">
            <Plot chart={chart} />
            <p className="absolute top-px left-[3px] flex items-center gap-[2px] leading-[8px] whitespace-pre">
              <svg viewBox="0 0 6 4" className="h-[2px] w-[4px]" aria-hidden="true"><path d="M0 4h6L3 0z" fill="#fff" /></svg>
              {chart.name}  {chart.ohlc}
            </p>
            <div className="font-['Open_Sans',sans-serif] text-[6px]"><OneClick chart={chart} /></div>
          </div>
          <div
            className={clsx(
              'relative flex shrink-0 flex-col justify-between pt-[4px] pb-[5px] pl-[3px] leading-[7px]',
              chart.wide && 'w-[30px]',
              chart.narrow && 'w-[24px]',
              !chart.wide && !chart.narrow && 'w-[27px]',
            )}
          >
            {chart.scale.map((value) => <span key={value}>{value}</span>)}
            {chart.ask && (
              <span
                className="absolute left-0 h-[7px] w-[25px] bg-[#e01010]"
                style={{ top: `${((chart.ask - top - 14) / height) * 100}%` }}
              />
            )}
            <span
              className={clsx('absolute left-0 h-[6px] bg-[#f4f4f4] pl-[3px] leading-[6px] text-[#222]', chart.wide ? 'w-[28px]' : chart.narrow ? 'w-[22px]' : 'w-[25px]')}
              style={{ top: `${((chart.price - top - 9) / height) * 100}%` }}
            >
              {chart.tag}
            </span>
          </div>
        </div>
        <div className="grid h-[10px] w-[82%] shrink-0 grid-cols-5 leading-[9px] whitespace-nowrap">
          {chart.dates.map((date) => (
            <span key={date} className="relative before:absolute before:top-0 before:left-px before:h-px before:w-px before:bg-[#8e8e8e]">{date}</span>
          ))}
        </div>
      </div>
    </article>
  );
}

function Workspace() {
  const [tab, setTab] = useState('XAUUSD,H1');

  return (
    <main className="flex min-w-0 flex-1 flex-col">
      <div className="grid min-h-0 flex-1 grid-cols-3 grid-rows-2 border-t border-l border-[#555c63] bg-[#abb5bf]">
        {CHARTS.map((chart) => <ChartWindow key={chart.name} chart={chart} />)}
      </div>
      <div className="flex h-[14px] shrink-0 items-start border-t border-[#777] pl-[2px] text-[#8a8a8a]">
        {CHART_TABS.map((name) => (
          <button
            type="button"
            key={name}
            onClick={() => setTab(name)}
            className={clsx(
              'h-[10px] px-[6px] leading-[10px]',
              name === tab ? 'border-x border-b border-[#555] bg-white text-[#222]' : 'border-r border-[#b0b0b0]',
            )}
          >
            {name}
          </button>
        ))}
        <div className="ml-auto flex gap-[6px] pt-[3px] pr-[3px]">
          <Icon className="size-[4px]"><path d="M14 2L4 10l10 8z" fill="#888" /></Icon>
          <Icon className="size-[4px]"><path d="M6 2l10 8-10 8z" fill="#888" /></Icon>
        </div>
      </div>
    </main>
  );
}

/* ---------- terminal ---------- */

function Terminal() {
  const [tab, setTab] = useState('Trade');

  return (
    <section className="flex h-[84px] shrink-0 border-b border-[#c8c8c8] pr-[2px] pl-[2px]">
      <div className="flex w-[7px] shrink-0 flex-col items-center gap-[3px] pt-[3px]">
        <button type="button" aria-label="Close Terminal" className="shrink-0">
          <Icon className="size-[4px]"><path d="M2 2l16 16M18 2L2 18" stroke="#222" strokeWidth="3" /></Icon>
        </button>
        <div className="flex w-full flex-1 items-end bg-linear-to-b from-[#b4cdec] to-[#86a9d0] pb-px">
          <h2 className="rotate-180 leading-[7px] text-[#14202f] [writing-mode:vertical-rl]">Terminal</h2>
        </div>
      </div>
      <div className="flex min-w-0 flex-1 flex-col">
        <div className="h-[71px] shrink-0 border-t border-b border-t-[#b8b8b8] border-b-[#777] bg-white">
          <table className="w-full table-fixed border-collapse text-right leading-[10px] text-[#333]">
            <thead>
              <tr className="h-[10px] border-b border-[#e2e2e2]">
                {TERMINAL_COLUMNS.map(([name, width], i) => (
                  <th key={i} className={clsx('border-r border-[#e2e2e2] py-0 pr-[2px] font-normal last:border-r-0', width, i === 0 && 'pl-[3px] text-left')}>
                    {name}
                    {i === 0 && <span className="ml-[5px] text-[#aaa]">/</span>}
                  </th>
                ))}
              </tr>
            </thead>
            <tbody>
              <tr className="h-[10px]">
                {TERMINAL_COLUMNS.map(([, , value], i) => (
                  <td key={i} className="border-r border-[#e2e2e2] py-0 pr-[2px] last:border-r-0">
                    {i === 0 && (
                      <span className="flex items-center gap-[2px] pl-px">
                        <Icon className="size-[8px]">
                          <path d="M3 1h9l5 5v13H3z" fill="#fff" stroke="#777" strokeWidth="1.5" />
                          <path d="M13 9l6 5-6 6-6-6z" fill="#dd4420" />
                        </Icon>
                        {value}
                      </span>
                    )}
                    {i > 0 && i < 11 && value}
                    {i === 11 && (
                      <span className="flex items-center justify-end gap-[5px]">
                        {value}
                        <button type="button" aria-label="Close order">
                          <Icon className="size-[6px]"><path d="M2 2l16 16M18 2L2 18" stroke="#888" strokeWidth="2" /></Icon>
                        </button>
                      </span>
                    )}
                  </td>
                ))}
              </tr>
              <tr className="h-[10px] bg-[#c6c6c6] font-bold text-[#111]">
                <td colSpan={11} className="py-0 text-left">
                  <span className="flex items-center gap-[3px] pl-px whitespace-pre">
                    <Icon className="size-[7px]">
                      <path d="M1 1h18v18H1z" fill="#f3f3f3" stroke="#888" strokeWidth="1.5" />
                      <path d="M10 4l6 6-6 6-6-6z" fill="#dd4420" />
                    </Icon>
                    {'Balance: 2 728.64 EUR  Equity: 2 728.17  Margin: 74.55  Free margin: 2 653.62  Margin level: 3659.61%'}
                  </span>
                </td>
                <td className="py-0 pr-[13px]">-0.47</td>
              </tr>
            </tbody>
          </table>
        </div>
        <div className="flex items-start text-[#8a8a8a]">
          {TERMINAL_TABS.map(([name, count]) => (
            <button
              type="button"
              key={name}
              onClick={() => setTab(name)}
              className={clsx(
                'flex h-[10px] px-[5px] leading-[10px]',
                name === tab ? 'border-x border-b border-[#555] bg-white text-[#222]' : 'border-r border-[#b0b0b0]',
              )}
            >
              {name}
              {count && <span className="ml-px pt-[2px] text-[5px] leading-[8px] font-bold text-[#e03040]">{count}</span>}
            </button>
          ))}
        </div>
      </div>
    </section>
  );
}

function StatusBar() {
  return (
    <footer className="flex h-[12px] shrink-0 items-center pl-[2px] leading-[10px] text-[#333]">
      <span className="flex-1">For Help, press F1</span>
      <span className="w-[63px] border-l border-[#c4c4c4] pl-[2px]">Default</span>
      <span className="h-[10px] w-[56px] border-l border-[#c4c4c4]" />
      <span className="h-[10px] w-[38px] border-l border-[#c4c4c4]" />
      <span className="h-[10px] w-[38px] border-l border-[#c4c4c4]" />
      <span className="h-[10px] w-[36px] border-l border-[#c4c4c4]" />
      <span className="h-[10px] w-[37px] border-l border-[#c4c4c4]" />
      <span className="h-[10px] w-[36px] border-l border-[#c4c4c4]" />
      <span className="flex w-[68px] items-center gap-[2px] border-l border-[#c4c4c4] pl-[2px]">
        <svg viewBox="0 0 28 14" className="h-[7px] w-[14px]" aria-hidden="true">
          <path d="M0 0h28v14H0z" fill="#4c9a3a" />
          <path d="M0 9h5V8h5V6h6V5h6V2h6v12H0z" fill="#c43a24" />
          <path d="M4.500 0v14M9.500 0v14M14.500 0v14M19.500 0v14M24.500 0v14" stroke="#e8d8a0" />
        </svg>
        23107/5 kb
      </span>
    </footer>
  );
}

export default function App() {
  return (
    <div className="flex h-screen min-h-[555px] flex-col overflow-hidden bg-[#f0f0f0] font-['Open_Sans','Noto_Sans',sans-serif] text-[6px] leading-[9px]">
      <TitleBar />
      <MenuBar />
      <MainToolbar />
      <LineToolbar />
      <div className="flex min-h-0 flex-1 pt-px">
        <MarketWatch />
        <Workspace />
      </div>
      <Terminal />
      <StatusBar />
    </div>
  );
}
